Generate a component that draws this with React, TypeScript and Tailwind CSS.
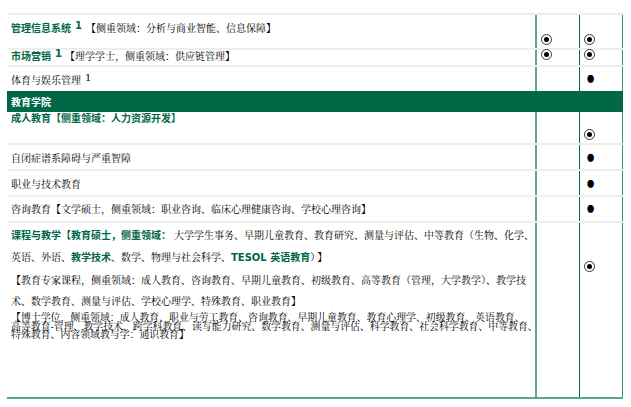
const FONT = "font-['DejaVu_Serif','Noto_Serif_CJK_SC',serif]";

function B({ children }: { children: React.ReactNode }) {
  return <b className="font-['DejaVu_Sans','Noto_Sans_CJK_SC',sans-serif] font-bold text-[#006747]">{children}</b>;
}

function Sup({ green }: { green?: boolean }) {
  return <span className={`relative -top-[3px] ml-1 text-[10px] ${green ? "font-['DejaVu_Sans',sans-serif] font-bold text-[#006747]" : "font-['DejaVu_Serif',serif]"}`}>1</span>;
}

function Mark({ kind, pad }: { kind?: "radio" | "dot"; pad: string }) {
  if (!kind) return null;
  return kind === "radio" ? (
    <div className={pad}>
      <svg viewBox="0 0 11 11" className="block h-[11px] w-[11px]" aria-hidden="true">
        <circle cx="5.5" cy="5.5" r="5" fill="none" stroke="#222" strokeWidth="0.9" />
        <circle cx="5.5" cy="5.5" r="2.5" fill="#000" />
      </svg>
    </div>
  ) : (
    <div className={`${pad} font-['Liberation_Serif',serif] text-[19px] leading-[12px]`}>
      <span className="inline-block w-[13px] scale-x-[0.8] text-center">●</span>
    </div>
  );
}

function Row({
  h,
  children,
  a,
  b,
  markPad,
}: {
  h: string;
  children: React.ReactNode;
  a?: "radio" | "dot";
  b?: "radio" | "dot";
  markPad: string;
}) {
  return (
    <div className={`flex ${h} border-t-2 border-[#eeeeee]`}>
      <div className="min-w-0 flex-1 pl-1">{children}</div>
      <div className="w-[44px] border-l-2 border-[#5fa58c] pl-[4px]">
        <Mark kind={a} pad={markPad} />
      </div>
      <div className="w-[44px] border-l border-r border-l-[#006747] border-r-[#3f8f73] pl-[4px]">
        <Mark kind={b} pad={markPad} />
      </div>
    </div>
  );
}

export default function App() {
  return (
    <div lang="zh-CN" className={`${FONT} h-[407px] w-[631px] overflow-hidden bg-white pl-[7px] pr-2 pt-[13px] text-[10px] text-black`}>
      <Row h="h-[35px]" a="radio" b="radio" markPad="pt-[19px]">
        <div className="pt-[6px] leading-[16px]">
          <B>管理信息系统</B>
          <Sup green />
          <span className="ml-[4px]">【侧重领域：分析与商业智能、信息保障】</span>
        </div>
      </Row>
      <Row h="h-[17px]" a="radio" b="radio" markPad="-mt-[1px]">
        <div className="leading-[14px]">
          <B>市场营销</B>
          <Sup green />
          <span className="ml-[3px]">【理学学士，侧重领域：供应链管理】</span>
        </div>
      </Row>
      <Row h="h-[26px]" b="dot" markPad="pt-[5px]">
        <div className="pt-[6px] leading-[16px]">
          体育与娱乐管理
          <Sup />
        </div>
      </Row>
      <div className="h-[21px] bg-[#006747] pl-1 leading-[23px] text-white">
        <b className="font-['DejaVu_Sans','Noto_Sans_CJK_SC',sans-serif] font-bold">教育学院</b>
      </div>
      <div className="flex h-[31px]">
        <div className="min-w-0 flex-1 pl-1 leading-[14px]">
          <B>成人教育【侧重领域：人力资源开发】</B>
        </div>
        <div className="w-[44px] border-l-2 border-[#5fa58c]" />
        <div className="w-[44px] border-l border-r border-l-[#006747] border-r-[#3f8f73] pl-[4px]">
          <Mark kind="radio" pad="pt-[17px]" />
        </div>
      </div>
      <Row h="h-[26px]" b="dot" markPad="pt-[6px]">
        <div className="pt-[6px] leading-[16px]">自闭症谱系障碍与严重智障</div>
      </Row>
      <Row h="h-[26px]" b="dot" markPad="pt-[6px]">
        <div className="pt-[6px] leading-[16px]">职业与技术教育</div>
      </Row>
      <Row h="h-[26px]" b="dot" markPad="pt-[5px]">
        <div className="pt-[5px] leading-[16px]">咨询教育【文学硕士，侧重领域：职业咨询、临床心理健康咨询、学校心理咨询】</div>
      </Row>
      <div className="flex h-[178px] border-y-2 border-t-[#eeeeee] border-b-[#5fa58c]">
        <div className="min-w-0 flex-1 pl-1">
          <p className="pt-[2px] leading-[22px]">
            <B>课程与教学【教育硕士，侧重领域：</B>
            <span className="ml-[3px]">大学学生事务、早期儿童教育、教育研究、测量与评估、中等教育（生物、化学、英语、外语、</span>
            <B>教学技术</B>、数学、物理与社会科学、<B>TESOL 英语教育</B>）<span className="ml-[2px]">】</span>
          </p>
          <p className="mt-[1px] leading-[21px]">【教育专家课程，侧重领域：成人教育、咨询教育、早期儿童教育、初级教育、高等教育（管理，大学教学）、教学技术、数学教育、测量与评估、学校心理学、特殊教育、职业教育】</p>
          <p className="mt-[2px] whitespace-nowrap text-[9.9px] leading-[8.5px]">
            【博士学位，侧重领域：成人教育、职业与劳工教育、咨询教育、早期儿童教育、教育心理学、初级教育、英语教育、
            <br />
            高等教育-管理、教学技术、跨学科教育、读写能力研究、数学教育、测量与评估、科学教育、社会科学教育、中等教育、
            <br />
            特殊教育、内容领域教与学：通识教育】
          </p>
        </div>
        <div className="w-[44px] border-l-2 border-[#5fa58c]" />
        <div className="w-[44px] border-l border-r border-l-[#006747] border-r-[#3f8f73] pl-[4px]">
          <Mark kind="radio" pad="pt-[38px]" />
        </div>
      </div>
    </div>
  );
}
